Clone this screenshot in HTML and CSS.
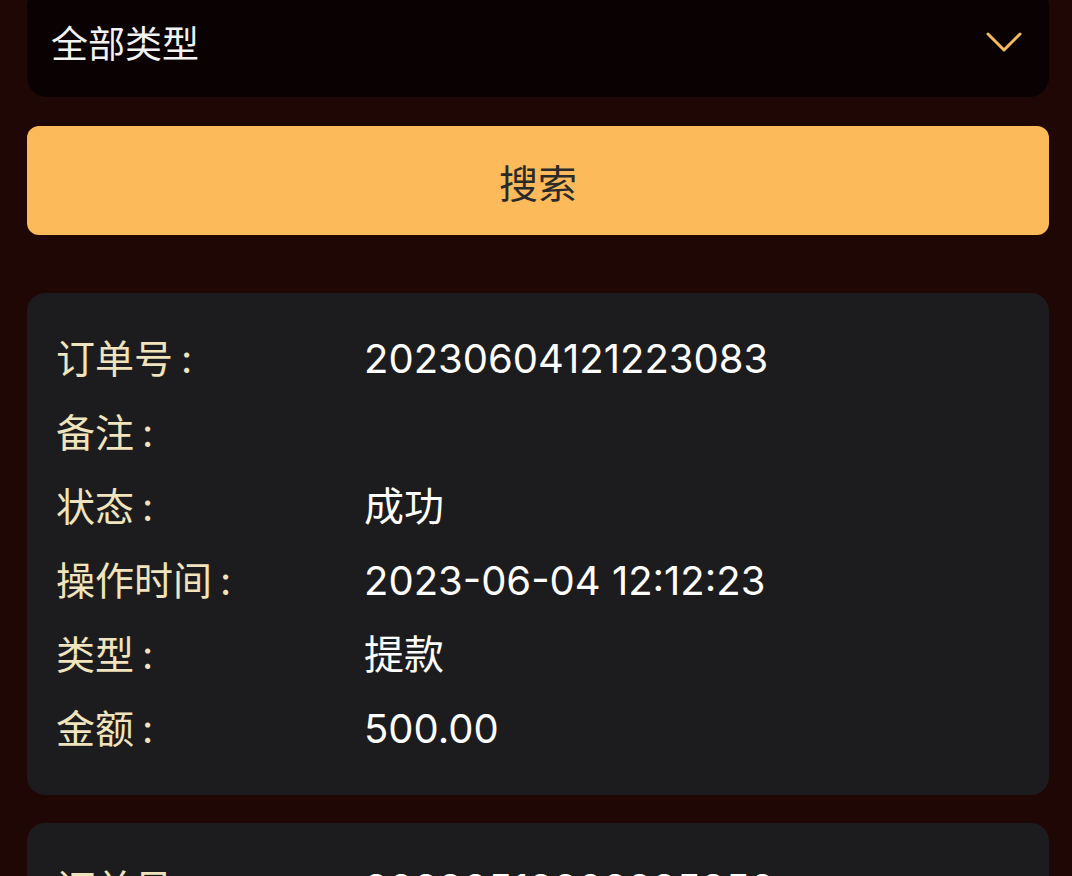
FILE: index.html
```html
<!DOCTYPE html>
<html lang="zh-CN">
<head>
  <meta charset="UTF-8">
  <title>交易记录</title>
  <link rel="stylesheet" href="styles.css">
</head>
<body>

<div class="page">
  <div class="type-select">
    <span>全部类型</span>
    <svg class="chevron" width="36" height="22" viewBox="0 0 36 22">
      <polyline points="2,3 18,19 34,3" fill="none" stroke="#f6b95b" stroke-width="3" stroke-linecap="round" stroke-linejoin="round"/>
    </svg>
  </div>

  <button class="search-btn">搜索</button>

  <div class="record">
    <div class="row"><span class="label">订单号<i>:</i></span><span class="value">20230604121223083</span></div>
    <div class="row"><span class="label">备注<i>:</i></span><span class="value"></span></div>
    <div class="row"><span class="label">状态<i>:</i></span><span class="value">成功</span></div>
    <div class="row"><span class="label">操作时间<i>:</i></span><span class="value">2023-06-04 12:12:23</span></div>
    <div class="row"><span class="label">类型<i>:</i></span><span class="value">提款</span></div>
    <div class="row"><span class="label">金额<i>:</i></span><span class="value">500.00</span></div>
  </div>

  <div class="record">
    <div class="row"><span class="label">订单号<i>:</i></span><span class="value">20230518202325850</span></div>
    <div class="row"><span class="label">备注<i>:</i></span><span class="value"></span></div>
    <div class="row"><span class="label">状态<i>:</i></span><span class="value">成功</span></div>
  </div>
</div>

</body>
</html>
```

FILE: styles.css
```css
body {
  margin: 0;
  background-color: #1f0705;
  font-family: Inter, "Noto Sans CJK SC", sans-serif;
  overflow: hidden;
}
.page {
  padding: 0 23px 0 27px;
}
.type-select {
  margin-top: -13px;
  height: 110px;
  display: flex;
  align-items: center;
  justify-content: space-between;
  padding: 0 27px 0 24px;
  background-color: #0a0202;
  border-radius: 20px;
  color: #f2f2f2;
  font-size: 37px;
}
.chevron {
  display: block;
}
.search-btn {
  display: block;
  width: 100%;
  height: 109px;
  margin-top: 29px;
  border: none;
  border-radius: 12px;
  background-color: #fdba5b;
  color: #2a2a2a;
  font-family: "Noto Sans CJK SC", sans-serif;
  font-size: 39px;
  cursor: pointer;
}
.record {
  margin-top: 58px;
  padding: 28.5px 30px 28.5px 29px;
  background-color: #1c1c1e;
  border-radius: 18px;
}
.record + .record {
  margin-top: 28px;
}
.row {
  display: grid;
  grid-template-columns: 308px 1fr;
  height: 74.2px;
  line-height: 74px;
  font-size: 39px;
}
.label {
  color: #efe4bd;
}
.label i {
  font-style: normal;
  margin-left: 8px;
}
.value {
  color: #ffffff;
  font-size: 40px;
}
```
